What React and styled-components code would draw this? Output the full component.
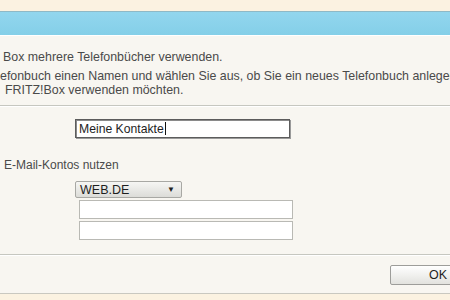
import React from 'react';
import styled, { createGlobalStyle } from 'styled-components';

const GlobalStyle = createGlobalStyle`
  html, body {
    margin: 0;
    padding: 0;
    width: 450px;
    height: 300px;
    overflow: hidden;
    background: #f8f6f1;
  }
  body {
    font-family: "Liberation Sans", Arial, sans-serif;
  }
`;

const Dialog = styled.div`
  width: 450px;
  height: 300px;
  overflow: hidden;
  display: flex;
  flex-direction: column;
  background: #f8f6f1;
  color: #4a4a4a;
  font-size: 12.4px;
`;

const TopStrip = styled.div`
  height: 11px;
  flex: none;
  background: #fbf2e1;
  border-bottom: 1px solid #8fb9c6;
`;

const TitleBar = styled.div`
  height: 23px;
  flex: none;
  background: linear-gradient(180deg, #92d6ee 0%, #84cfe8 100%);
  border-bottom: 1px solid #ffffff;
`;

const Content = styled.div`
  flex: 1;
  padding-top: 14px;
  display: flex;
  flex-direction: column;
`;

const Para = styled.p`
  margin: 0 0 ${p => p.$gap || 0}px ${p => p.$indent || 0}px;
  line-height: 14px;
  white-space: nowrap;
  overflow: hidden;
`;

const Divider = styled.div`
  height: 1px;
  background: #c6c7c0;
  border-bottom: 1px solid #ffffff;
  margin-top: ${p => p.$top}px;
`;

const Field = styled.div`
  margin: ${p => p.$top}px 0 0 ${p => p.$left}px;
  width: ${p => p.$width}px;
  height: ${p => p.$height}px;
  box-sizing: border-box;
  background: #ffffff;
  border: 1px solid ${p => (p.$strong ? '#5c5c5c' : '#b9b9b4')};
  box-shadow: ${p => (p.$strong ? '1px 1px 0 #9a9a9a, inset 1px 1px 0 #8a8a8a' : 'none')};
  display: flex;
  align-items: center;
  padding-left: 3px;
  color: #1e1e1e;
  font-size: 12.2px;
`;

const Caret = styled.span`
  display: inline-block;
  width: 1px;
  height: 13px;
  background: #111;
  margin-left: 1px;
`;

const Label = styled.div`
  margin: 20px 0 0 4px;
  line-height: 14px;
  font-size: 12px;
`;

const Select = styled.div`
  margin: 9px 0 0 75px;
  width: 107px;
  height: 17px;
  box-sizing: border-box;
  border: 1px solid #a8a8a4;
  border-radius: 2px;
  background: linear-gradient(180deg, #f6f6f4 0%, #dcdcd8 100%);
  display: flex;
  align-items: center;
  justify-content: space-between;
  padding: 0 6px 0 4px;
  color: #1e1e1e;
  font-size: 12.5px;
`;

const Arrow = styled.span`
  font-size: 8px;
  color: #222;
`;

const Footer = styled.div`
  display: flex;
  justify-content: flex-end;
  margin-top: 9px;
  margin-right: -36px;
`;

const Button = styled.button`
  width: 96px;
  height: 20px;
  box-sizing: border-box;
  border: 1px solid #9d9d9a;
  border-radius: 2px;
  background: linear-gradient(180deg, #ffffff 0%, #e2e2de 100%);
  font-family: "Liberation Sans", Arial, sans-serif;
  font-size: 12.5px;
  color: #1e1e1e;
  padding: 0;
`;

const BottomStrip = styled.div`
  margin-top: 8px;
  flex: 1;
  background: #fbf2e1;
  border-top: 1px solid #c9c8c0;
`;

export default function App() {
  return (
    <>
      <GlobalStyle />
      <Dialog>
        <TopStrip />
        <TitleBar />
        <Content>
          <Para $indent={3} $gap={5}>Box mehrere Telefonbücher verwenden.</Para>
          <Para>efonbuch einen Namen und wählen Sie aus, ob Sie ein neues Telefonbuch anlegen</Para>
          <Para $indent={5}>FRITZ!Box verwenden möchten.</Para>
          <Divider $top={8} />
          <Field $strong $top={12} $left={75} $width={215} $height={19}>
            Meine Kontakte<Caret />
          </Field>
          <Label>E-Mail-Kontos nutzen</Label>
          <Select>
            WEB.DE<Arrow>▼</Arrow>
          </Select>
          <Field $top={2} $left={79} $width={214} $height={19} />
          <Field $top={2} $left={79} $width={214} $height={19} />
          <Divider $top={14} />
          <Footer>
            <Button>OK</Button>
          </Footer>
          <BottomStrip />
        </Content>
      </Dialog>
    </>
  );
}
